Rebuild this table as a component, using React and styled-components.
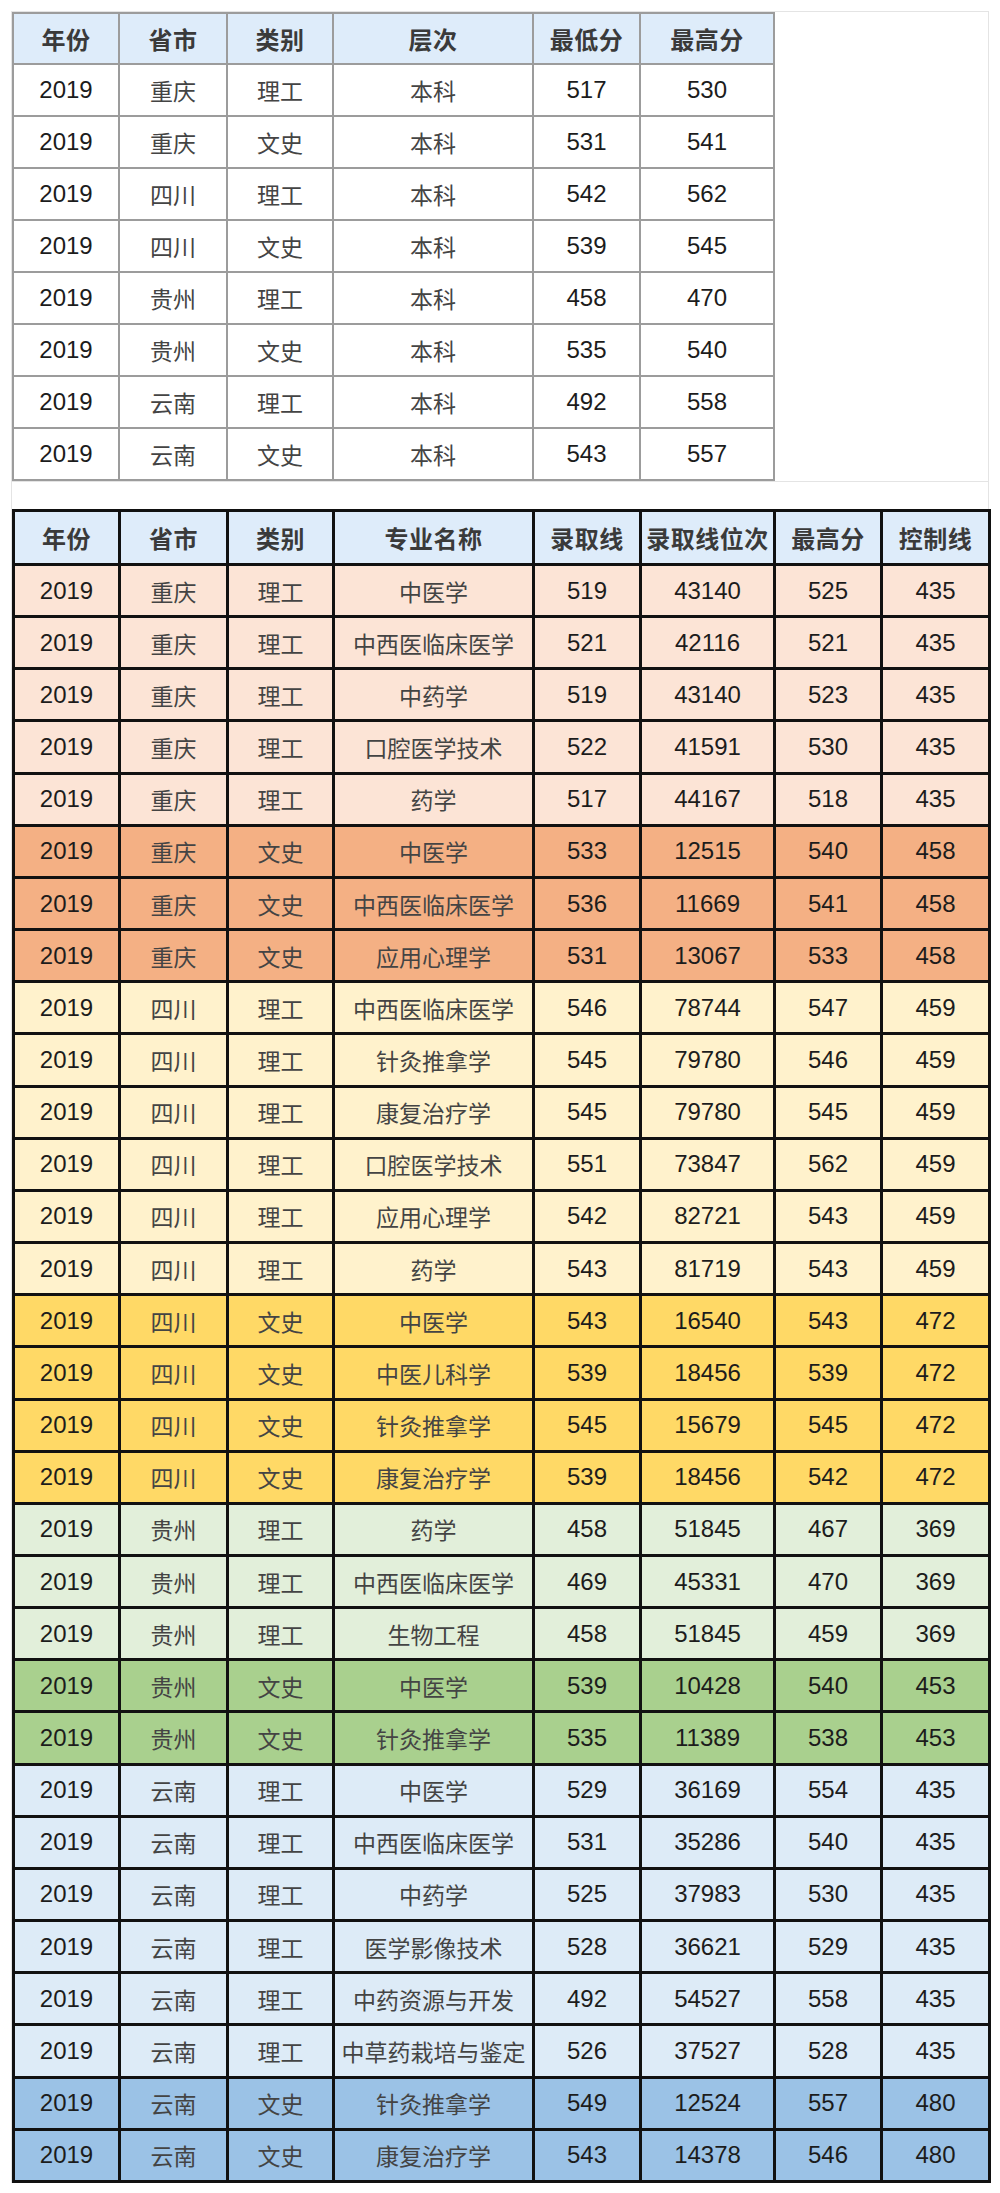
import React from "react";
import styled, { createGlobalStyle } from "styled-components";

const GlobalStyle = createGlobalStyle`
    html, body {
        margin: 0;
        padding: 0;
        background: #ffffff;
    }
    body {
        font-family: "Liberation Sans", "Noto Sans CJK SC", sans-serif;
    }
`

const Page = styled.div`
    width: 1000px;
    min-height: 2193px;
    padding-top: 11px;
    box-sizing: border-box;
`

const Frame = styled.div`
    margin: 0 11px;
    border: 1px solid #e4e4e4;
    border-bottom: none;
    display: flex;
    flex-direction: column;
    gap: 27px;
`

const TopBlock = styled.div`
    border-bottom: 1px solid #e4e4e4;
`

const Table = styled.table`
    border-collapse: collapse;
    table-layout: fixed;
    width: ${props => props.$width}px;
    border: ${props => props.$strong ? "3px solid #111" : "2px solid #9c9c9c"};
`

// heights below leave out the collapsed border, which the browser adds on top
const HeadCell = styled.th`
    height: ${props => props.$strong ? 51 : 49}px;
    padding: 0;
    background: #deecfa;
    border: ${props => props.$strong ? "3px solid #111" : "2px solid #9c9c9c"};
    font-family: "Noto Sans CJK SC", sans-serif;
    font-size: 24px;
    font-weight: 700;
    color: #3a3a3a;
    text-align: center;
    vertical-align: middle;
    white-space: nowrap;
    letter-spacing: 0.5px;
`

const Row = styled.tr`
    background: ${props => props.$bg || "#ffffff"};
`

const Cell = styled.td`
    height: ${props => props.$strong ? 49.16 : 50}px;
    padding: 0;
    border: ${props => props.$strong ? "3px solid #111" : "2px solid #9c9c9c"};
    text-align: center;
    vertical-align: middle;
    white-space: nowrap;
    font-family: ${props => props.$num ? `"Liberation Sans", Arial, sans-serif` : `"Noto Sans CJK SC", sans-serif`};
    font-size: ${props => props.$num ? 24 : 23}px;
    color: ${props => props.$num ? "#1c1c1c" : "#444444"};
    overflow: hidden;
`

const widths = [106, 108, 106, 200, 107, 134, 107, 108]

const summary = [
    ["重庆", "理工", 517, 530],
    ["重庆", "文史", 531, 541],
    ["四川", "理工", 542, 562],
    ["四川", "文史", 539, 545],
    ["贵州", "理工", 458, 470],
    ["贵州", "文史", 535, 540],
    ["云南", "理工", 492, 558],
    ["云南", "文史", 543, 557],
]

const groups = [
    { prov: "重庆", type: "理工", bg: "#fce4d6", rows: [
        ["中医学", 519, 43140, 525, 435],
        ["中西医临床医学", 521, 42116, 521, 435],
        ["中药学", 519, 43140, 523, 435],
        ["口腔医学技术", 522, 41591, 530, 435],
        ["药学", 517, 44167, 518, 435],
    ]},
    { prov: "重庆", type: "文史", bg: "#f4b084", rows: [
        ["中医学", 533, 12515, 540, 458],
        ["中西医临床医学", 536, 11669, 541, 458],
        ["应用心理学", 531, 13067, 533, 458],
    ]},
    { prov: "四川", type: "理工", bg: "#fff2cc", rows: [
        ["中西医临床医学", 546, 78744, 547, 459],
        ["针灸推拿学", 545, 79780, 546, 459],
        ["康复治疗学", 545, 79780, 545, 459],
        ["口腔医学技术", 551, 73847, 562, 459],
        ["应用心理学", 542, 82721, 543, 459],
        ["药学", 543, 81719, 543, 459],
    ]},
    { prov: "四川", type: "文史", bg: "#ffd966", rows: [
        ["中医学", 543, 16540, 543, 472],
        ["中医儿科学", 539, 18456, 539, 472],
        ["针灸推拿学", 545, 15679, 545, 472],
        ["康复治疗学", 539, 18456, 542, 472],
    ]},
    { prov: "贵州", type: "理工", bg: "#e2efda", rows: [
        ["药学", 458, 51845, 467, 369],
        ["中西医临床医学", 469, 45331, 470, 369],
        ["生物工程", 458, 51845, 459, 369],
    ]},
    { prov: "贵州", type: "文史", bg: "#a9d08e", rows: [
        ["中医学", 539, 10428, 540, 453],
        ["针灸推拿学", 535, 11389, 538, 453],
    ]},
    { prov: "云南", type: "理工", bg: "#ddebf7", rows: [
        ["中医学", 529, 36169, 554, 435],
        ["中西医临床医学", 531, 35286, 540, 435],
        ["中药学", 525, 37983, 530, 435],
        ["医学影像技术", 528, 36621, 529, 435],
        ["中药资源与开发", 492, 54527, 558, 435],
        ["中草药栽培与鉴定", 526, 37527, 528, 435],
    ]},
    { prov: "云南", type: "文史", bg: "#9bc2e6", rows: [
        ["针灸推拿学", 549, 12524, 557, 480],
        ["康复治疗学", 543, 14378, 546, 480],
    ]},
]

const ColGroup = ({count}) => (
    <colgroup>
        {widths.slice(0, count).map((w, i) => <col key={i} style={{width: w}} />)}
    </colgroup>
)

const SummaryTable = () => {
    const heads = ["年份", "省市", "类别", "层次", "最低分", "最高分"]
    return(
        <Table $width={761}>
            <ColGroup count={6} />
            <thead>
                <tr>{heads.map(h => <HeadCell key={h}>{h}</HeadCell>)}</tr>
            </thead>
            <tbody>
                {summary.map((r, i) => (
                    <Row key={i}>
                        <Cell $num>2019</Cell>
                        <Cell>{r[0]}</Cell>
                        <Cell>{r[1]}</Cell>
                        <Cell>本科</Cell>
                        <Cell $num>{r[2]}</Cell>
                        <Cell $num>{r[3]}</Cell>
                    </Row>
                ))}
            </tbody>
        </Table>
    )
}

const MajorTable = () => {
    const heads = ["年份", "省市", "类别", "专业名称", "录取线", "录取线位次", "最高分", "控制线"]
    return(
        <Table $width={976} $strong>
            <ColGroup count={8} />
            <thead>
                <tr>{heads.map(h => <HeadCell key={h} $strong>{h}</HeadCell>)}</tr>
            </thead>
            <tbody>
                {groups.map(g => g.rows.map((r, i) => (
                    <Row key={g.prov + g.type + i} $bg={g.bg}>
                        <Cell $strong $num>2019</Cell>
                        <Cell $strong>{g.prov}</Cell>
                        <Cell $strong>{g.type}</Cell>
                        <Cell $strong>{r[0]}</Cell>
                        <Cell $strong $num>{r[1]}</Cell>
                        <Cell $strong $num>{r[2]}</Cell>
                        <Cell $strong $num>{r[3]}</Cell>
                        <Cell $strong $num>{r[4]}</Cell>
                    </Row>
                )))}
            </tbody>
        </Table>
    )
}

const App = () => {
    return(
        <Page>
            <GlobalStyle />
            <Frame>
                <TopBlock>
                    <SummaryTable />
                </TopBlock>
                <MajorTable />
            </Frame>
        </Page>
    )
}

export default App;
